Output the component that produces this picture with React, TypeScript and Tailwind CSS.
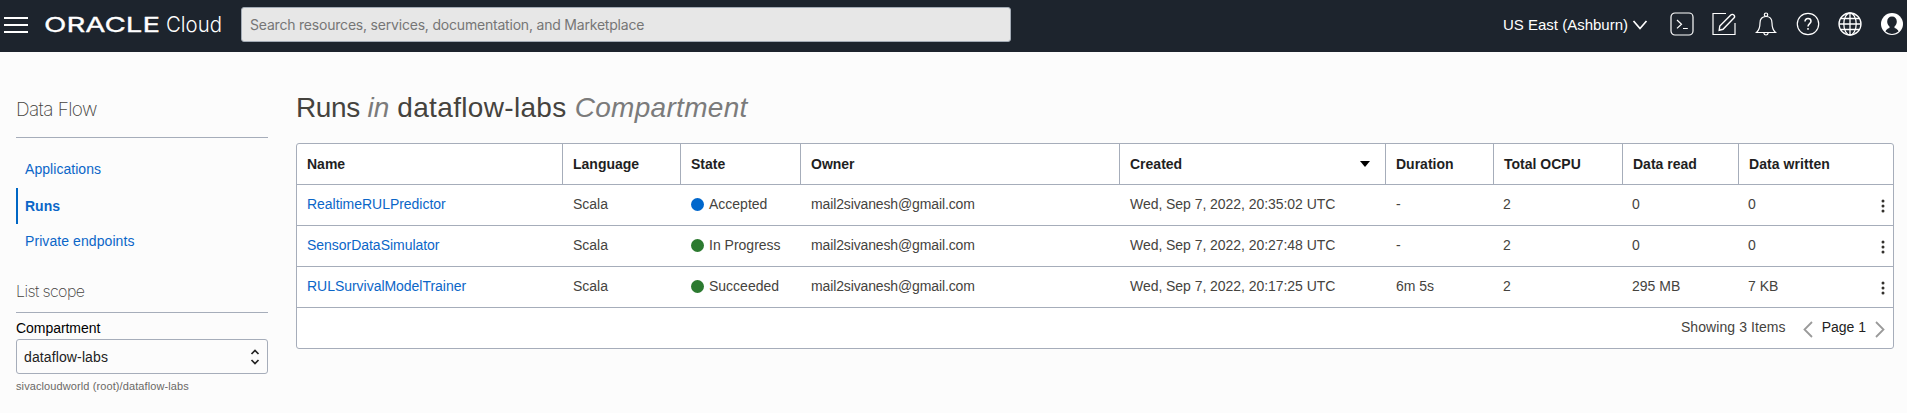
import React from "react";

type Run = {
  name: string;
  state: string;
  color: string;
  created: string;
  duration: string;
  read: string;
  written: string;
};

const runs: Run[] = [
  { name: "RealtimeRULPredictor", state: "Accepted", color: "bg-[#0067cc]", created: "Wed, Sep 7, 2022, 20:35:02 UTC", duration: "-", read: "0", written: "0" },
  { name: "SensorDataSimulator", state: "In Progress", color: "bg-[#2c7a30]", created: "Wed, Sep 7, 2022, 20:27:48 UTC", duration: "-", read: "0", written: "0" },
  { name: "RULSurvivalModelTrainer", state: "Succeeded", color: "bg-[#2c7a30]", created: "Wed, Sep 7, 2022, 20:17:25 UTC", duration: "6m 5s", read: "295 MB", written: "7 KB" },
];

const columns = "grid grid-cols-[266px_118px_120px_319px_266px_108px_129px_116px_154px]";

function Header() {
  return (
    <header className="flex h-[52px] items-start bg-[#1d242d] text-white">
      <button className="mt-[17px] ml-1 flex w-6 shrink-0 flex-col gap-[5px]" aria-label="Menu">
        <span className="h-[2px] w-6 bg-white" />
        <span className="h-[2px] w-6 bg-white" />
        <span className="h-[2px] w-6 bg-white" />
      </button>
      <div className="ml-[13px] flex h-[48px] w-[187px] shrink-0 items-center">
        <svg className="overflow-visible" width="187" height="48" viewBox="-4 0 187 48" fill="#fff">
          <text x="-1" y="32" textLength="116" lengthAdjust="spacingAndGlyphs" fontSize="20.5" fontWeight="400" stroke="#fff" strokeWidth="0.3" fontFamily="Inter, sans-serif">ORACLE</text>
          <text x="121" y="32" textLength="56" lengthAdjust="spacingAndGlyphs" fontSize="22" fontWeight="300" fontFamily="Inter, sans-serif">Cloud</text>
        </svg>
      </div>
      <div className="mt-[7px] ml-[13px] flex h-[35px] w-[770px] items-center rounded-[3px] border border-[#a3abb5] bg-[#e7e7e7] px-2 font-[Inter,sans-serif] text-sm tracking-[-0.2px] text-[#767676]">
        Search resources, services, documentation, and Marketplace
      </div>
      <div className="mt-[13px] ml-auto flex h-6 items-center text-[15px] whitespace-nowrap">
        <span className="w-[125px]">US East (Ashburn)</span>
        <svg className="ml-[4px]" width="16" height="12" viewBox="0 0 16 12" fill="none" stroke="#fff" strokeWidth="1.7">
          <path d="M1.5 2 8 9.5 14.5 2" />
        </svg>
      </div>
      <div className="mt-[12px] mr-[3px] ml-[22px] flex shrink-0 gap-[18px]">
        <svg width="24" height="24" viewBox="0 0 24 24" fill="none" stroke="#fff" strokeWidth="1.2">
          <rect x="1" y="1" width="22" height="22" rx="4" />
          <path d="M7 8l4.500 4.200L7 16.400M13 16.500h4.800" />
        </svg>
        <svg width="24" height="24" viewBox="0 0 24 24" fill="none" stroke="#fff" strokeWidth="1.2">
          <path d="M14 1.500H1v21h22V11" />
          <path d="M7.200 18.300l.6-4.300L18.800 3c1-1 2.200-.7 3 .1s1.100 2 .1 3L11 17.300z" strokeWidth="1.400" />
        </svg>
        <svg width="24" height="24" viewBox="0 0 24 24" fill="none" stroke="#fff" strokeWidth="1.2">
          <circle cx="12" cy="2.700" r="1.700" />
          <path d="M2.500 20.500c2.800-2.500 3.500-4.500 3.500-9.500 0-4 2-6.500 6-6.500s6 2.500 6 6.500c0 5 .7 7 3.500 9.500z" />
          <path d="M9.800 21c.3 1.300 1.200 2 2.200 2s1.900-.7 2.200-2" />
        </svg>
        <svg width="24" height="24" viewBox="0 0 24 24" fill="none" stroke="#fff" strokeWidth="1.2">
          <circle cx="12" cy="12" r="10.700" />
          <path d="M9 9.500C9 7.700 10.200 6.600 12 6.600s3 1.100 3 2.700c0 2.200-3 2.500-3 5.200M12 16v1.800" strokeWidth="1.500" />
        </svg>
        <svg width="24" height="24" viewBox="0 0 24 24" fill="none" stroke="#fff" strokeWidth="1.3">
          <circle cx="12" cy="12" r="11" />
          <ellipse cx="12" cy="12" rx="6.200" ry="11" />
          <path d="M12 1v22M1 12h22M3 6.500h18M3 17.500h18" />
        </svg>
        <svg width="24" height="24" viewBox="0 0 24 24">
          <circle cx="12" cy="12" r="11" fill="#fff" />
          <path d="M12 4.500c-3 0-4.800 2-4.800 5 0 2 .8 3.800 2.300 4.900v1.600c-2.300.7-3.500 1.800-4 3.600A11 11 0 0 0 12 22a11 11 0 0 0 6.500-2.400c-.5-1.800-1.700-2.900-4-3.600v-1.600c1.500-1.100 2.300-2.900 2.300-4.900 0-3-1.800-5-4.800-5z" fill="#1d242d" />
        </svg>
      </div>
    </header>
  );
}

function Sidebar() {
  return (
    <aside className="ml-4 w-[252px] shrink-0">
      <h2 className="mt-[44px] h-[42px] border-b border-[#a6adba] font-[Inter,sans-serif] text-[19px] leading-[28px] font-extralight tracking-[-0.6px] text-[#45433e]">Data Flow</h2>
      <nav className="mt-[14px] text-sm text-[#0b66c8]">
        <a className="flex h-9 items-center pb-[2px] pl-[9px] tracking-[0.05px]">Applications</a>
        <a className="flex h-9 items-center border-l-2 border-[#0067c5] pl-[7px] font-bold">Runs</a>
        <a className="flex h-9 items-center pb-[2px] pl-[9px] tracking-[0.08px]">Private endpoints</a>
      </nav>
      <h3 className="mt-[20px] h-[33px] border-b border-[#a6adba] font-[Inter,sans-serif] text-base leading-[22px] font-extralight tracking-[-0.6px] text-[#45433e]">List scope</h3>
      <div className="mt-[6px] h-[20px] text-sm leading-[18px] tracking-[-0.05px] text-black">Compartment</div>
      <div className="flex h-[35px] items-center justify-between rounded-[3px] border border-[#a6adba] pr-[7px] pl-[7px] text-sm tracking-[0.12px] text-[#222]">
        <span>dataflow-labs</span>
        <svg width="10" height="16" viewBox="0 0 10 16" fill="none" stroke="#222" strokeWidth="1.7">
          <path d="M1.500 5 5 1.500 8.500 5M1.500 11 5 14.500 8.500 11" />
        </svg>
      </div>
      <div className="mt-[3px] text-[11px] leading-[18px] tracking-[0.1px] text-[#6b6966]">sivacloudworld (root)/dataflow-labs</div>
    </aside>
  );
}

function RunsTable() {
  const head = "flex items-center border-r border-[#a6adba] pl-[10px]";
  const cell = "pb-[2px] pl-[10px]";
  return (
    <div className="w-[1598px] rounded-[3px] border border-[#a6adba] bg-white text-sm whitespace-nowrap text-[#45433e]">
      <div className={columns + " h-[41px] border-b border-[#a6adba] font-bold text-[#1f1f1f]"}>
        <div className={head}>Name</div>
        <div className={head}>Language</div>
        <div className={head}>State</div>
        <div className={head}>Owner</div>
        <div className={head + " justify-between pr-[15px]"}>
          Created
          <svg width="10" height="6" viewBox="0 0 10 6"><path d="M0 0h10L5 6z" fill="#000" /></svg>
        </div>
        <div className={head}>Duration</div>
        <div className={head}>Total OCPU</div>
        <div className={head}>Data read</div>
        <div className="flex items-center pl-[10px] tracking-[0.06px]">Data written</div>
      </div>
      {runs.map((r) => (
        <div key={r.name} className={columns + " h-[41px] items-center border-b border-[#a6adba]"}>
          <div className={cell + " tracking-[-0.03px] text-[#0b66c8]"}>{r.name}</div>
          <div className={cell}>Scala</div>
          <div className="flex items-center gap-[5px] pl-[10px]">
            <span className={"mb-[2px] size-[13px] rounded-full " + r.color} />
            <span className="pb-[2px]">{r.state}</span>
          </div>
          <div className={cell + " tracking-[-0.13px]"}>mail2sivanesh@gmail.com</div>
          <div className={cell + " tracking-[-0.05px]"}>{r.created}</div>
          <div className={cell}>{r.duration}</div>
          <div className="pb-[2px] pl-[9px]">2</div>
          <div className="pb-[2px] pl-[9px]">{r.read}</div>
          <div className="flex items-center justify-between pr-[8px] pl-[9px]">
            <span className="pb-[2px]">{r.written}</span>
            <svg className="mt-[1px]" width="4" height="14" viewBox="0 0 4 14" fill="#33312d">
              <circle cx="2" cy="2" r="1.500" /><circle cx="2" cy="7" r="1.500" /><circle cx="2" cy="12" r="1.500" />
            </svg>
          </div>
        </div>
      ))}
      <div className="flex h-10 items-center justify-end pr-[8px]">
        <span className="pb-[2px] tracking-[0.08px]">Showing 3 Items</span>
        <svg className="mt-[2px] ml-[17px]" width="10" height="17" viewBox="0 0 10 17" fill="none" stroke="#9a9a9a" strokeWidth="1.800"><path d="M9 1 1.500 8.500 9 16" /></svg>
        <span className="ml-[9px] pb-[2px] text-[#222]">Page 1</span>
        <svg className="mt-[2px] ml-[9px]" width="10" height="17" viewBox="0 0 10 17" fill="none" stroke="#9a9a9a" strokeWidth="1.800"><path d="M1 1 8.500 8.500 1 16" /></svg>
      </div>
    </div>
  );
}

export default function App() {
  return (
    <div className="h-[413px] w-[1907px] overflow-hidden bg-[#fcfcfc] font-['Liberation_Sans',Arial,sans-serif]">
      <Header />
      <div className="flex">
        <Sidebar />
        <main className="ml-7">
          <h1 className="mt-[38px] mb-[17px] h-9 text-[28px] leading-9 whitespace-nowrap text-[#45433e]">
            <span className="tracking-[-0.35px]">Runs </span>
            <i className="text-[#7b7b7b]">in</i>
            <span className="tracking-[0.33px]"> dataflow-labs </span>
            <i className="tracking-[0.3px] text-[#7b7b7b]">Compartment</i>
          </h1>
          <RunsTable />
        </main>
      </div>
    </div>
  );
}
